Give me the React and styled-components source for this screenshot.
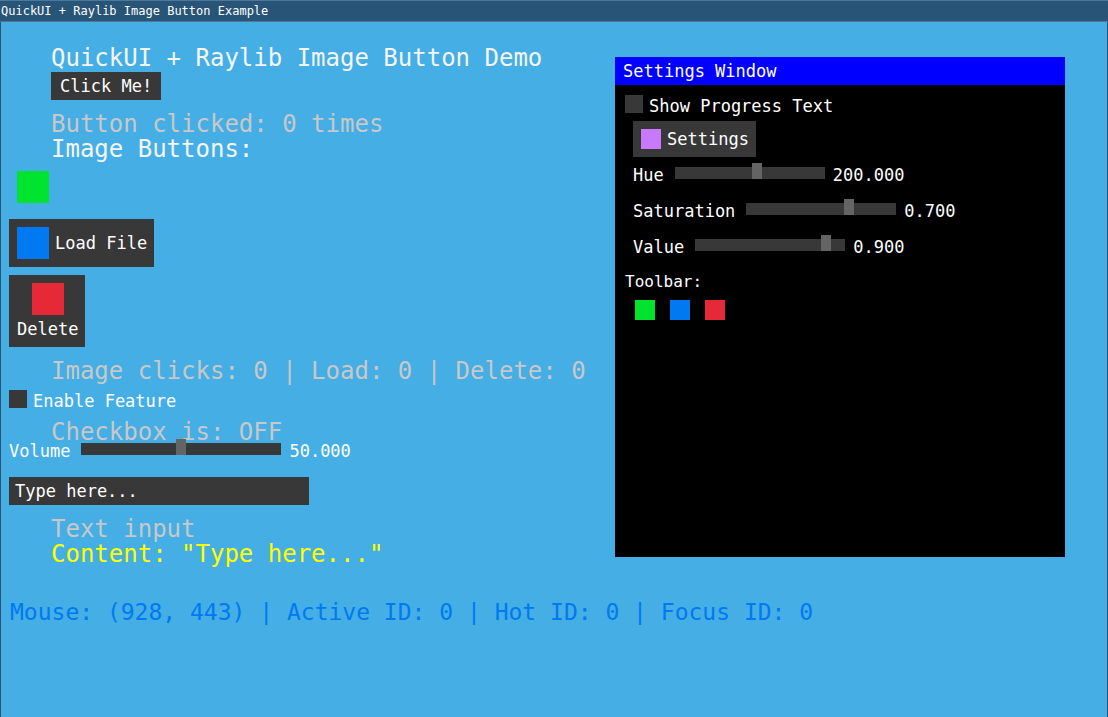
import React, { useState } from 'react';
import styled, { createGlobalStyle } from 'styled-components';

const colors = {
  frame: '#285577',
  frameLine: '#4c7899',
  control: '#383838',
  thumb: '#646464',
  light: '#f5f5f5',
  gray: '#c8c8c8',
  yellow: '#ffff00',
  green: '#00e430',
  blue: '#0079f1',
  red: '#e62937',
  purple: '#c87aff',
};

const GlobalStyle = createGlobalStyle`
  *, *::before, *::after { box-sizing: border-box; }
  body { margin: 0; background: #44aee5; }
  body, button, input {
    font-family: "DejaVu Sans Mono", "Liberation Mono", monospace;
    font-size: 17px;
    line-height: 20px;
    color: #fff;
  }
`;

const Frame = styled.div`
  display: flex;
  flex-direction: column;
  min-height: 100vh;
`;

const TitleBar = styled.header`
  height: 22px;
  padding: 0 1px;
  border-top: 1px solid ${colors.frameLine};
  border-bottom: 1px solid ${colors.frameLine};
  background: ${colors.frame};
  font-size: 12px;
  white-space: nowrap;
`;

const Client = styled.main`
  flex: 1;
  border: solid ${colors.frame};
  border-width: 0 1px;
  padding: 24px 42px 16px 8px;
`;

const Columns = styled.div`
  display: grid;
  grid-template-columns: minmax(0, 1fr) 450px;
`;

const Demo = styled.section`
  display: flex;
  flex-direction: column;
  align-items: flex-start;
`;

const Text = styled.p`
  margin: ${(p) => p.$top || 0}px 0 0 42px;
  font-size: 24px;
  line-height: 25px;
  font-weight: normal;
  white-space: nowrap;
  color: ${(p) => p.$color || colors.gray};
`;

const StatusText = styled(Text)`
  margin-left: 1px;
  font-size: 23px;
`;

const Button = styled.button`
  height: 28px;
  margin: 1px 0 0 42px;
  padding: 0 9px;
  border: 0;
  background: ${colors.control};
`;

const ImageButton = styled.button`
  display: flex;
  flex-direction: ${(p) => (p.$stacked ? 'column' : 'row')};
  align-items: center;
  gap: ${(p) => (p.$stacked ? 4 : 6)}px;
  padding: 8px 7px 8px 8px;
  border: 0;
  background: ${(p) => (p.$bare ? 'transparent' : colors.control)};
`;

const ToolButton = styled.button`
  display: flex;
  padding: 5px;
  border: 0;
  background: transparent;
`;

const Swatch = styled.span`
  width: ${(p) => p.$size}px;
  height: ${(p) => p.$size}px;
  background: ${(p) => p.$color};
`;

const ImageButtons = styled.div`
  display: flex;
  flex-direction: column;
  align-items: flex-start;
  gap: 8px;
  margin-top: 1px;
`;

const CheckLabel = styled.label`
  display: flex;
  align-items: flex-start;
  gap: 6px;
  margin-top: ${(p) => p.$top || 0}px;
`;

const CheckBox = styled.input`
  appearance: none;
  width: 18px;
  height: 18px;
  margin: 0;
  background: ${colors.control};
  &:checked { box-shadow: inset 0 0 0 4px ${colors.control}; background: ${colors.light}; }
`;

const CheckText = styled.span`
  padding-top: 1px;
`;

const SliderRow = styled.div`
  position: relative;
  display: flex;
  align-items: flex-start;
  margin-top: ${(p) => p.$top || 0}px;
`;

const Range = styled.input`
  appearance: none;
  width: ${(p) => p.$width}px;
  height: 12px;
  margin: 2px 8px 0 11px;
  background: ${colors.control};
  &::-webkit-slider-runnable-track { height: 12px; }
  &::-webkit-slider-thumb {
    appearance: none;
    width: 10px;
    height: 16px;
    margin-top: -4px;
    border-radius: 0;
    background: ${colors.thumb};
  }
`;

const TextBox = styled.input`
  width: 300px;
  height: 28px;
  margin-top: 16px;
  padding: 0 6px;
  border: 0;
  border-radius: 0;
  background: ${colors.control};
`;

const Panel = styled.section`
  align-self: start;
  min-height: 500px;
  margin-top: 11px;
  background: #000;
`;

const PanelTitle = styled.h2`
  margin: 0;
  padding: 4px 8px;
  background: #00f;
  font-size: 17px;
  font-weight: normal;
`;

const PanelBody = styled.div`
  padding: 10px;
`;

const PanelGroup = styled.div`
  display: flex;
  flex-direction: column;
  align-items: flex-start;
  gap: 8px;
  padding: 5px 8px 0;
`;

const Sliders = styled.div`
  display: flex;
  flex-direction: column;
  gap: 16px;
`;

const ToolbarTitle = styled.h3`
  margin: 15px 0 3px;
  font-size: 16px;
  font-weight: normal;
`;

const Toolbar = styled.div`
  display: flex;
  gap: 5px;
  padding-left: 5px;
`;

function Slider({ id, label, min, max, initial, width, top }) {
  const [value, setValue] = useState(initial);
  return (
    <SliderRow $top={top}>
      <label htmlFor={id}>{label}</label>
      <Range
        id={id}
        type="range"
        min={min}
        max={max}
        step="any"
        value={value}
        $width={width}
        onChange={(e) => setValue(Number(e.target.value))}
      />
      <output htmlFor={id}>{value.toFixed(3)}</output>
    </SliderRow>
  );
}

export default function App() {
  const [clicks, setClicks] = useState(0);
  const [images, setImages] = useState(0);
  const [loads, setLoads] = useState(0);
  const [deletes, setDeletes] = useState(0);
  const [enabled, setEnabled] = useState(false);
  const [content, setContent] = useState('Type here...');

  return (
    <Frame>
      <GlobalStyle />
      <TitleBar>QuickUI + Raylib Image Button Example</TitleBar>
      <Client>
        <Columns>
          <Demo>
            <Text as="h1" $color={colors.light}>QuickUI + Raylib Image Button Demo</Text>
            <Button onClick={() => setClicks(clicks + 1)}>Click Me!</Button>
            <Text $top={12}>Button clicked: {clicks} times</Text>
            <Text as="h2" $color={colors.light}>Image Buttons:</Text>
            <ImageButtons>
              <ImageButton $bare aria-label="Image" onClick={() => setImages(images + 1)}>
                <Swatch $size={32} $color={colors.green} />
              </ImageButton>
              <ImageButton onClick={() => setLoads(loads + 1)}>
                <Swatch $size={32} $color={colors.blue} />
                Load File
              </ImageButton>
              <ImageButton $stacked onClick={() => setDeletes(deletes + 1)}>
                <Swatch $size={32} $color={colors.red} />
                Delete
              </ImageButton>
            </ImageButtons>
            <Text $top={12}>Image clicks: {images} | Load: {loads} | Delete: {deletes}</Text>
            <CheckLabel $top={6}>
              <CheckBox type="checkbox" checked={enabled} onChange={(e) => setEnabled(e.target.checked)} />
              <CheckText>Enable Feature</CheckText>
            </CheckLabel>
            <Text $top={9}>Checkbox is: {enabled ? 'ON' : 'OFF'}</Text>
            <Slider id="volume" label="Volume" min={0} max={100} initial={50} width={200} top={-4} />
            <TextBox
              id="content"
              aria-label="Text input"
              value={content}
              onChange={(e) => setContent(e.target.value)}
            />
            <Text $top={12}>Text input</Text>
            <Text $color={colors.yellow}>Content: "{content}"</Text>
          </Demo>
          <Panel>
            <PanelTitle>Settings Window</PanelTitle>
            <PanelBody>
              <CheckLabel>
                <CheckBox type="checkbox" />
                <CheckText>Show Progress Text</CheckText>
              </CheckLabel>
              <PanelGroup>
                <ImageButton>
                  <Swatch $size={20} $color={colors.purple} />
                  Settings
                </ImageButton>
                <Sliders>
                  <Slider id="hue" label="Hue" min={0} max={360} initial={200} width={150} />
                  <Slider id="saturation" label="Saturation" min={0} max={1} initial={0.7} width={150} />
                  <Slider id="value" label="Value" min={0} max={1} initial={0.9} width={150} />
                </Sliders>
              </PanelGroup>
              <ToolbarTitle>Toolbar:</ToolbarTitle>
              <Toolbar>
                <ToolButton aria-label="Image">
                  <Swatch $size={20} $color={colors.green} />
                </ToolButton>
                <ToolButton aria-label="Load">
                  <Swatch $size={20} $color={colors.blue} />
                </ToolButton>
                <ToolButton aria-label="Delete">
                  <Swatch $size={20} $color={colors.red} />
                </ToolButton>
              </Toolbar>
            </PanelBody>
          </Panel>
        </Columns>
        <StatusText $top={33} $color={colors.blue}>
          Mouse: (928, 443) | Active ID: 0 | Hot ID: 0 | Focus ID: 0
        </StatusText>
      </Client>
    </Frame>
  );
}
